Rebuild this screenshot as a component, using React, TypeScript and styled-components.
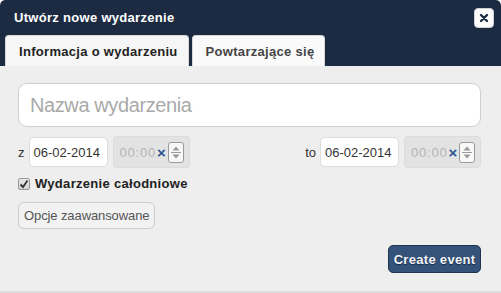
import React from "react";
import styled, { createGlobalStyle } from "styled-components";

const Global = createGlobalStyle`
  html, body { margin: 0; padding: 0; background: #ffffff; }
  body { font-family: "Liberation Sans", Arial, sans-serif; }
  * { box-sizing: border-box; }
`;

const Dialog = styled.div`
  width: 501px;
  height: 293px;
  display: flex;
  flex-direction: column;
  background: #eeeeee;
  border-radius: 5px 5px 0 0;
  overflow: hidden;
`;

const Header = styled.div`
  background: #1c2b42;
  height: 66px;
  padding: 0 7px 0 5px;
  display: flex;
  flex-direction: column;
  border-radius: 5px 5px 0 0;
`;

const TitleRow = styled.div`
  height: 35px;
  display: flex;
  align-items: center;
  justify-content: space-between;
  padding-left: 9px;
  padding-bottom: 1px;
`;

const Title = styled.span`
  color: #ffffff;
  font-weight: bold;
  font-size: 13px;
  letter-spacing: 0.3px;
`;

const CloseButton = styled.button`
  width: 20px;
  height: 20px;
  border: 1px solid #d0d0d0;
  border-radius: 4px;
  background: #fdfdfd;
  padding: 0;
  display: flex;
  align-items: center;
  justify-content: center;
  margin-top: 1px;
`;

const Tabs = styled.div`
  display: flex;
  gap: 3px;
  height: 31px;
`;

const Tab = styled.div<{ $active?: boolean }>`
  height: 31px;
  padding: 0 10px 0 13px;
  display: flex;
  align-items: center;
  font-size: 13px;
  font-weight: bold;
  letter-spacing: 0.3px;
  color: ${(p) => (p.$active ? "#222222" : "#444444")};
  background: ${(p) => (p.$active ? "#f6f6f6" : "#fafafa")};
  border: 1px solid #d8d8d8;
  border-bottom: none;
  border-radius: 4px 4px 0 0;
`;

const Body = styled.div`
  flex: 1;
  padding: 17px 20px 0 18px;
  display: flex;
  flex-direction: column;
  border-bottom: 2px solid #dcdcdc;
`;

const NameInput = styled.div`
  height: 44px;
  background: #ffffff;
  border: 1px solid #cfcfcf;
  border-radius: 9px;
  display: flex;
  align-items: center;
  padding-left: 11px;
  font-size: 20px;
  letter-spacing: -0.4px;
  color: #a9a9a9;
`;

const DateRow = styled.div`
  margin-top: 9px;
  height: 32px;
  display: flex;
  align-items: center;
  justify-content: space-between;
`;

const Group = styled.div`
  display: flex;
  align-items: center;
`;

const Label = styled.span<{ $gap: number }>`
  font-size: 13px;
  color: #333333;
  margin-right: ${(p) => p.$gap}px;
`;

const DateInput = styled.div`
  width: 79px;
  height: 30px;
  background: #ffffff;
  border: 1px solid #dcdcdc;
  border-radius: 5px;
  display: flex;
  align-items: center;
  padding-left: 4px;
  font-size: 13px;
  color: #333333;
`;

const TimeBox = styled.div`
  width: 77px;
  height: 32px;
  margin-left: 5px;
  background: #e3e3e3;
  border: 1px solid #dddddd;
  border-radius: 4px;
  display: flex;
  align-items: center;
  padding-left: 6px;
`;

const TimeText = styled.span`
  font-size: 13px;
  color: #b4b4b4;
  letter-spacing: 0.8px;
`;

const Clear = styled.span`
  margin-left: 1px;
  color: #2c5592;
  font-size: 15px;
  font-weight: bold;
  line-height: 1;
`;

const Spinner = styled.div`
  margin-left: 2px;
  width: 16px;
  height: 21px;
  background: #f8f8f8;
  border: 1px solid #9a9a9a;
  border-radius: 3px;
  display: flex;
  flex-direction: column;
  align-items: center;
  justify-content: center;
`;

const CheckRow = styled.div`
  margin-top: 9px;
  height: 13px;
  display: flex;
  align-items: center;
  gap: 5px;
`;

const CheckBox = styled.div`
  width: 12px;
  height: 12px;
  border: 1px solid #9a9a9a;
  border-radius: 2px;
  background: linear-gradient(#e8e8e8, #d4d4d4);
  display: flex;
  align-items: center;
  justify-content: center;
`;

const CheckLabel = styled.span`
  font-size: 13px;
  font-weight: bold;
  letter-spacing: 0.3px;
  color: #222222;
`;

const SecondaryButton = styled.div`
  margin-top: 12px;
  align-self: flex-start;
  height: 27px;
  padding: 0 5px;
  border: 1px solid #cccccc;
  border-radius: 6px;
  background: #f2f2f2;
  display: flex;
  align-items: center;
  font-size: 13px;
  color: #555555;
  letter-spacing: -0.1px;
`;

const Footer = styled.div`
  margin-top: 16px;
  display: flex;
  justify-content: flex-end;
`;

const PrimaryButton = styled.div`
  height: 28px;
  width: 93px;
  border: 1px solid #1f344f;
  border-radius: 5px;
  background: #34527a;
  color: #f2f4f8;
  font-weight: bold;
  font-size: 13px;
  letter-spacing: 0.3px;
  display: flex;
  align-items: center;
  justify-content: center;
  text-shadow: 0 1px 1px #1a2a40;
`;

const TimeField = () => (
  <TimeBox>
    <TimeText>00:00</TimeText>
    <Clear>×</Clear>
    <Spinner>
      <svg width="10" height="17" viewBox="0 0 10 17">
        <path d="M1.5 6.5 L5 2.5 L8.5 6.5 Z" fill="#9a9a9a" />
        <line x1="0" y1="8.5" x2="10" y2="8.5" stroke="#9a9a9a" strokeWidth="1" />
        <path d="M1.5 10.5 L5 14.5 L8.5 10.5 Z" fill="#9a9a9a" />
      </svg>
    </Spinner>
  </TimeBox>
);

export default function App() {
  return (
    <>
      <Global />
      <Dialog>
        <Header>
          <TitleRow>
            <Title>Utwórz nowe wydarzenie</Title>
            <CloseButton aria-label="close">
              <svg width="10" height="10" viewBox="0 0 10 10">
                <path d="M2 2 L8 8 M8 2 L2 8" stroke="#1c2b42" strokeWidth="2.4" strokeLinecap="round" />
              </svg>
            </CloseButton>
          </TitleRow>
          <Tabs>
            <Tab $active>Informacja o wydarzeniu</Tab>
            <Tab>Powtarzające się</Tab>
          </Tabs>
        </Header>
        <Body>
          <NameInput>Nazwa wydarzenia</NameInput>
          <DateRow>
            <Group>
              <Label $gap={4}>z</Label>
              <DateInput>06-02-2014</DateInput>
              <TimeField />
            </Group>
            <Group>
              <Label $gap={4}>to</Label>
              <DateInput>06-02-2014</DateInput>
              <TimeField />
            </Group>
          </DateRow>
          <CheckRow>
            <CheckBox>
              <svg width="10" height="10" viewBox="0 0 10 10">
                <path d="M1.5 5.5 L4 8 L8.5 1.5" stroke="#333" strokeWidth="1.8" fill="none" />
              </svg>
            </CheckBox>
            <CheckLabel>Wydarzenie całodniowe</CheckLabel>
          </CheckRow>
          <SecondaryButton>Opcje zaawansowane</SecondaryButton>
          <Footer>
            <PrimaryButton>Create event</PrimaryButton>
          </Footer>
        </Body>
      </Dialog>
    </>
  );
}
